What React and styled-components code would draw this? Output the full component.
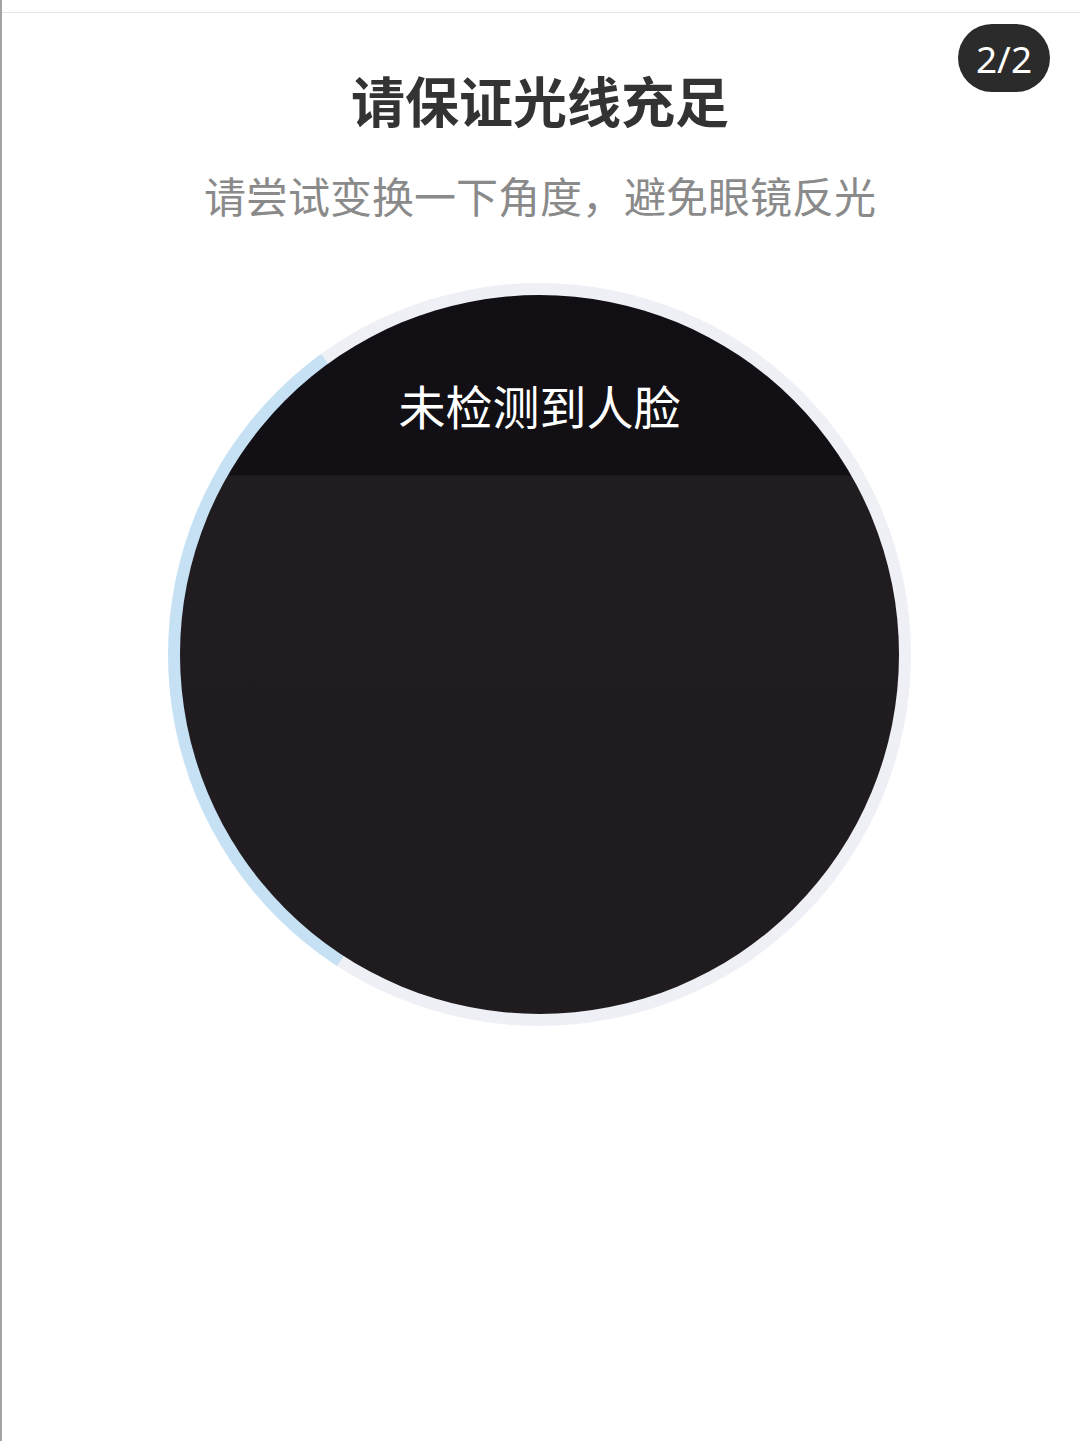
import React from 'react';
import styled, { createGlobalStyle } from 'styled-components';

const GlobalStyle = createGlobalStyle`
  html, body {
    margin: 0;
    padding: 0;
    background: #ffffff;
  }
  body {
    font-family: "Noto Sans CJK SC", "Noto Sans", sans-serif;
  }
`;

const App = () => {
  return (
    <>
      <GlobalStyle />
      <Page>
        <Screen>
          <Counter>2/2</Counter>
          <Title>请保证光线充足</Title>
          <Hint>请尝试变换一下角度，避免眼镜反光</Hint>
          <Ring progressFrom={213} progressTo={324}>
            <Camera>
              <Status>未检测到人脸</Status>
            </Camera>
          </Ring>
        </Screen>
      </Page>
    </>
  );
};

export default App;

const Page = styled.div`
  box-sizing: border-box;
  width: 1080px;
  height: 1441px;
  padding-top: 12px;
  border-left: 2px solid #a3a3a3;
  overflow: hidden;
`;

const Screen = styled.div`
  position: relative;
  display: flex;
  flex-direction: column;
  align-items: center;
  height: 100%;
  border-top: 1px solid #e6e6e6;
  padding-top: 55px;
  box-sizing: border-box;
`;

const Counter = styled.div`
  position: absolute;
  top: 11px;
  right: 30px;
  width: 92px;
  height: 68px;
  border-radius: 34px;
  background: #2b2b2b;
  color: #ffffff;
  font-family: "Noto Sans", "Open Sans", sans-serif;
  font-size: 37px;
  display: flex;
  align-items: center;
  justify-content: center;
`;

const Title = styled.h1`
  margin: 0 0 0 -2px;
  font-size: 54px;
  line-height: 1.2;
  font-weight: 700;
  color: #333333;
`;

const Hint = styled.p`
  margin: 37px 0 0 -2px;
  font-size: 42px;
  line-height: 1.2;
  font-weight: 400;
  color: #8a8a8a;
`;

const Ring = styled.div`
  margin: 63px 0 0 -3px;
  width: 743px;
  height: 743px;
  border-radius: 50%;
  display: flex;
  align-items: center;
  justify-content: center;
  background: conic-gradient(
    #eef0f6 0deg ${(p) => p.progressFrom}deg,
    #c6e1f4 ${(p) => p.progressFrom}deg ${(p) => p.progressTo}deg,
    #eef0f6 ${(p) => p.progressTo}deg 360deg
  );
`;

const Camera = styled.div`
  width: 719px;
  height: 719px;
  border-radius: 50%;
  background: linear-gradient(#110f13 0, #121014 180px, #201c1f 181px, #1f1b1e 100%);
  display: flex;
  flex-direction: column;
  align-items: center;
  box-sizing: border-box;
  padding-top: 82px;
`;

const Status = styled.div`
  font-size: 47px;
  line-height: 1.2;
  color: #ffffff;
`;
